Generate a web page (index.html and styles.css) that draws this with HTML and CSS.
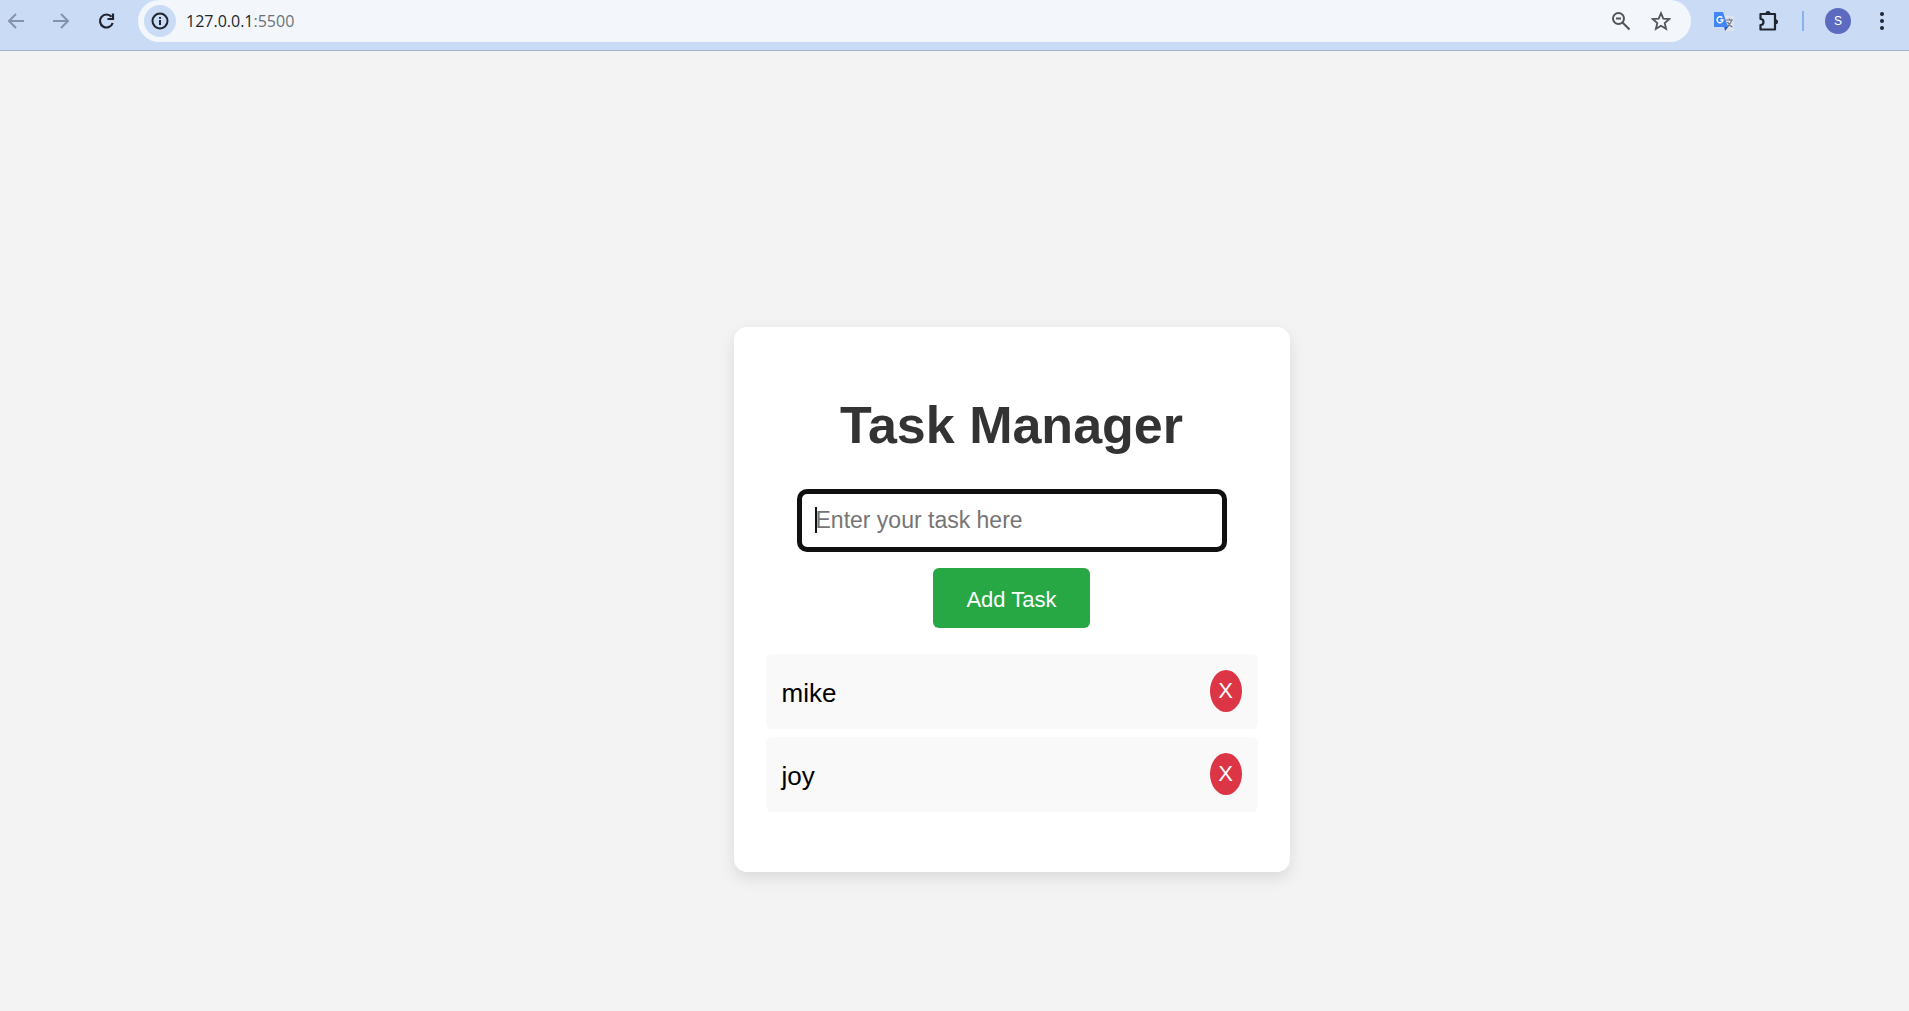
FILE: index.html
```html
<!DOCTYPE html>
<html lang="en">
<head>
<meta charset="utf-8">
<title>Task Manager</title>
<link rel="stylesheet" href="styles.css">
</head>
<body>
<header class="toolbar">
  <nav class="nav" aria-label="Browser navigation">
    <button class="icon-btn dim" aria-label="Back"><svg width="20" height="20" viewBox="0 0 20 20"><path d="M18 10H3M10 3l-7 7 7 7"/></svg></button>
    <button class="icon-btn dim" aria-label="Forward"><svg width="20" height="20" viewBox="0 0 20 20"><path d="M2 10h15M10 3l7 7-7 7"/></svg></button>
    <button class="icon-btn" aria-label="Reload"><svg width="20" height="20" viewBox="0 0 20 20"><path d="M15.500 5.800A6.500 6.500 0 1 0 16.700 12M17 2.500v5.500h-5.500" stroke-width="2.200"/></svg></button>
  </nav>
  <div class="address">
    <button class="info" aria-label="View site information"><svg width="18" height="18" viewBox="0 0 18 18"><circle cx="9" cy="9" r="7.500"/><path d="M9 8v5M9 5v1.800"/></svg></button>
    <span class="url">127.0.0.1<span class="port">:5500</span></span>
    <button class="icon-btn grey" aria-label="Zoom"><svg width="20" height="20" viewBox="0 0 20 20"><circle cx="7.500" cy="7.500" r="5.500"/><path d="M11.500 11.500l7 7M5 7.500h5"/></svg></button>
    <button class="icon-btn grey" aria-label="Bookmark this tab"><svg width="20" height="20" viewBox="0 0 20 20"><path d="M10 2.200l2.300 5.400 5.900.5-4.500 3.900 1.400 5.800-5.100-3.100-5.100 3.100 1.400-5.800-4.500-3.900 5.900-.5z" stroke-width="1.800"/></svg></button>
  </div>
  <div class="extensions">
    <button class="icon-btn wide" aria-label="Google Translate"><svg width="20" height="20" viewBox="0 0 20 20"><path d="M8 5h12v15h-8z" fill="#dfe3e8" stroke="none"/><path d="M12 9h7M15.500 7.500V9M17.500 9c-.5 3-2 5-5 6.500M13.500 11c1 2 2.500 4 5 5" stroke="#6b7480" stroke-width="1.200"/><path d="M10 15h5l-4 5z" fill="#2a56c6" stroke="none"/><path d="M0 1h9l5 15H0z" fill="#4285f4" stroke="none"/><path d="M8.300 6.800A3 3 0 1 0 9 9H6.300" stroke="#fff" stroke-width="1.400"/></svg></button>
    <button class="icon-btn wide" aria-label="Extensions"><svg width="22" height="22" viewBox="0 0 22 22"><path d="M2.500 4h14.500v15.500H2.500v-4.500a3 3 0 0 0 0-6z" stroke-width="2.200" stroke-linejoin="round"/><path d="M7.500 3.500a2.500 2.500 0 0 1 5 0zM17.500 9.300a2.500 2.500 0 0 1 0 5z" fill="#1f2430" stroke="none"/></svg></button>
    <span class="divider"></span>
    <button class="avatar" aria-label="Profile">S</button>
    <button class="icon-btn" aria-label="Menu"><svg width="20" height="20" viewBox="0 0 20 20"><g fill="#1f2430" stroke="none"><circle cx="10" cy="3" r="2"/><circle cx="10" cy="10" r="2"/><circle cx="10" cy="17" r="2"/></g></svg></button>
  </div>
</header>
<main class="page">
  <section class="card">
    <h1 class="title">Task Manager</h1>
    <form class="task-form">
      <div class="field"><input class="task-input" type="text" placeholder="Enter your task here" aria-label="Task"></div>
      <button class="add" type="button">Add Task</button>
    </form>
    <ul class="tasks">
      <li class="task"><span class="name">mike</span><button class="remove" aria-label="Remove mike">X</button></li>
      <li class="task"><span class="name">joy</span><button class="remove" aria-label="Remove joy">X</button></li>
    </ul>
  </section>
</main>
</body>
</html>
```
FILE: styles.css
```css
* { box-sizing: border-box; }
body {
  margin: 0;
  min-height: 100vh;
  display: flex;
  flex-direction: column;
  background: #f3f3f3;
  font-family: "Liberation Sans", Arial, sans-serif;
}
button { border: 0; padding: 0; background: none; font-family: inherit; }
svg { display: block; fill: none; stroke: #1f2430; stroke-width: 2; }

.toolbar {
  display: flex;
  height: 51px;
  padding-bottom: 8px;
  background: #cadbf5;
  border-bottom: 1px solid #a2b3cf;
}
.nav { display: flex; align-items: center; gap: 25px; padding: 0 22px 0 6px; }
.icon-btn { display: flex; align-items: center; justify-content: center; min-width: 20px; }
.wide { min-width: 24px; }
.dim svg { stroke: #8492aa; }
.grey svg { stroke: #50555c; }
.address {
  flex: 1;
  display: flex;
  align-items: center;
  gap: 20px;
  padding: 0 20px 0 6px;
  border-radius: 21px;
  background: #f3f7fc;
}
.info {
  display: flex;
  align-items: center;
  justify-content: center;
  width: 32px;
  height: 32px;
  border-radius: 50%;
  background: #cadbf5;
}
.url { flex: 1; margin-left: -10px; font: 16px/24px "Open Sans", "Noto Sans", sans-serif; color: #22262c; }
.port { color: #6c7178; }
.extensions { display: flex; align-items: center; padding: 0 17px 0 21px; gap: 21px; }
.divider { width: 2px; height: 20px; background: #8ab0f0; }
.avatar { width: 26px; height: 26px; border-radius: 50%; background: #5c6bc0; color: #fff; font-size: 12px; }

.page { flex: 1; display: flex; align-items: center; justify-content: center; padding: 139px 0 2px 114px; }
.card {
  width: 556px;
  padding: 66px 32px 60px;
  border-radius: 13px;
  background: #fff;
  box-shadow: 0 6px 16px rgba(0, 0, 0, 0.1);
}
.title { margin: 0 0 32px; font-size: 52px; line-height: 64px; text-align: center; color: #333; }
.task-form { display: flex; flex-direction: column; align-items: center; gap: 16px; margin-bottom: 26px; }
.field { position: relative; width: 430px; }
.field::before { content: ""; position: absolute; left: 18px; top: 18px; width: 2px; height: 26px; background: #101010; }
.task-input {
  display: block;
  width: 100%;
  height: 63px;
  padding: 0 14px;
  border: 5px solid #101010;
  border-radius: 10px;
  background: #fff;
  font: 23px "Liberation Sans", Arial, sans-serif;
  outline: 0;
}
.task-input::placeholder { color: #757575; }
.add { height: 60px; padding: 3px 33px 0; border-radius: 6px; background: #28a745; color: #fff; font-size: 22px; }
.tasks { display: flex; flex-direction: column; gap: 8px; margin: 0; padding: 0; list-style: none; }
.task {
  display: flex;
  align-items: flex-start;
  justify-content: space-between;
  padding: 16px 16px 17px;
  border-radius: 6px;
  background: #f9f9f9;
  font-size: 26px;
}
.name { padding-top: 4px; line-height: 38px; }
.remove { width: 32px; height: 42px; border-radius: 50%; background: #dc3545; color: #fff; font-size: 22px; }
```
